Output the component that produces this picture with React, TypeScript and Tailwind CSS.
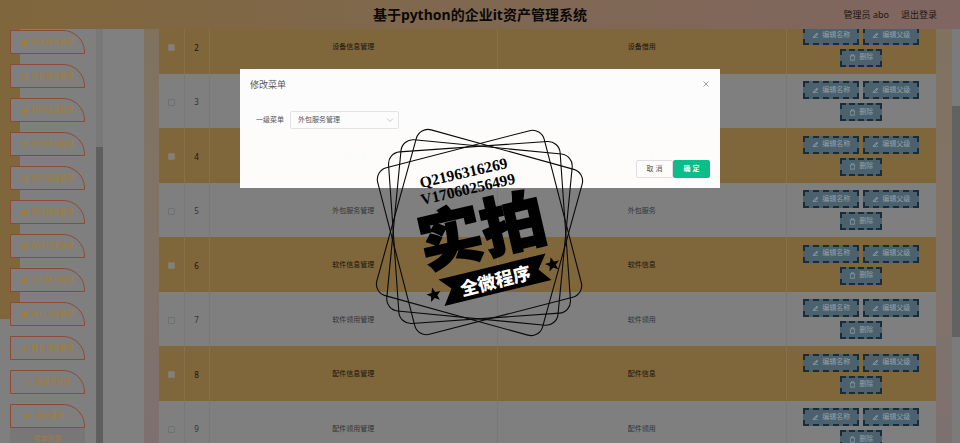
import React from "react";
import {
  RiArrowDownSLine,
  RiBriefcaseFill,
  RiClipboardFill,
  RiDeleteBin7Line,
  RiEdit2Line,
  RiFlagFill,
  RiListCheck2,
  RiCoupon3Fill,
  RiArchiveDrawerFill,
  RiComputerFill,
  RiUserFill,
} from "react-icons/ri";

function FourSquares({ className }: { className?: string }) {
  return (
    <svg viewBox="0 0 7 7" className={className} fill="currentColor">
      <path d="M0 0.5h3v2.5h-3zM4 0.5h3v2.5h-3zM0 4h3v2.5h-3zM4 4h3v2.5h-3z" />
    </svg>
  );
}

function Bars({ className }: { className?: string }) {
  return (
    <svg viewBox="0 0 7 7" className={className} fill="currentColor">
      <path d="M0 3h1.8v3.8h-1.8zM2.6 0.3h1.8v6.5h-1.8zM5.2 2h1.8v4.8h-1.8z" />
    </svg>
  );
}

const menu = [
  { label: "附属服务管理", icon: RiClipboardFill },
  { label: "外包服务管理", icon: FourSquares },
  { label: "软件信息管理", icon: Bars },
  { label: "软件领用管理", icon: FourSquares },
  { label: "配件信息管理", icon: FourSquares },
  { label: "配件领用管理", icon: RiCoupon3Fill },
  { label: "配件归还管理", icon: RiBriefcaseFill },
  { label: "办公耗材管理", icon: RiArchiveDrawerFill },
  { label: "耗材入库管理", icon: RiComputerFill },
  { label: "耗材领用管理", icon: RiUserFill },
  { label: "管理员管理", icon: RiListCheck2 },
  { label: "系统管理", icon: RiFlagFill },
];

const rows = [
  { id: 2, parent: "设备信息管理", name: "设备借用" },
  { id: 3, parent: "附属服务管理", name: "附属服务" },
  { id: 4, parent: "外包服务管理", name: "外包类型" },
  { id: 5, parent: "外包服务管理", name: "外包服务" },
  { id: 6, parent: "软件信息管理", name: "软件信息" },
  { id: 7, parent: "软件领用管理", name: "软件领用" },
  { id: 8, parent: "配件信息管理", name: "配件信息" },
  { id: 9, parent: "配件领用管理", name: "配件领用" },
];

function Header() {
  return (
    <header className="relative flex h-[29px] shrink-0 items-center justify-end bg-linear-to-r from-[#80663b] via-[#7f6850] to-[#806662] px-[23px]">
      <h1 className="absolute inset-x-0 text-center text-[14px] leading-[28px] font-bold text-[#0c0907]">
        基于python的企业it资产管理系统
      </h1>
      <div className="relative flex gap-3 text-[9px] text-[#1d1614]">
        <span>管理员 abo</span>
        <a href="#logout">退出登录</a>
      </div>
    </header>
  );
}

function Sidebar() {
  return (
    <aside className="flex w-[103px] shrink-0 overflow-hidden bg-[#7f7f7f]">
      <nav className="relative min-w-0 flex-1">
        <div className="absolute top-0 left-0 h-[290px] w-5 bg-[#80663b]" />
        <ul className="relative flex flex-col gap-[10px] pt-px pl-[10px]">
          {menu.map(({ label, icon: Icon }, i) => (
            <li key={label} className="w-[75px]">
              <a
                href="#menu"
                className={
                  "flex h-6 items-center rounded-tr-[22px] border border-[#8e4a35] bg-[#7f7f7f] pr-[5px] text-[7px] whitespace-nowrap text-[#a17d3a] " +
                  (label.length < 6 ? "gap-1 pl-[13px]" : "gap-[3px] pl-[10px]")
                }
              >
                <Icon className="size-[7px] shrink-0" />
                <span>{label}</span>
                <RiArrowDownSLine className="-ml-1 ml-auto size-[6px] shrink-0 text-[#8a7658]" />
              </a>
              {i === menu.length - 1 && (
                <a href="#list" className="block h-6 bg-[#777777] text-center text-[7px] leading-[21px] text-[#a17d3a]">
                  菜单列表
                </a>
              )}
            </li>
          ))}
        </ul>
      </nav>
      <div className="w-[7px] bg-[#787878] pt-[118px]">
        <div className="h-full bg-[#5f5f5f]" />
      </div>
    </aside>
  );
}

function ActionButton({ label, remove }: { label: string; remove?: boolean }) {
  const Icon = remove ? RiDeleteBin7Line : RiEdit2Line;
  return (
    <button
      className={
        "flex h-[18px] items-center justify-center gap-[3px] border-2 border-dashed border-[#182d39] bg-[#4b626e] text-[7px] whitespace-nowrap text-[#94a0a6] " +
        (remove ? "w-[42px]" : "w-14")
      }
    >
      <Icon className="size-[7px]" />
      {label}
    </button>
  );
}

function MenuTable() {
  return (
    <table className="-mt-[10px] w-full table-fixed border-collapse text-center text-[7px]">
      <colgroup>
        <col className="w-[25px]" />
        <col className="w-[25px]" />
        <col />
        <col />
        <col className="w-[150px]" />
      </colgroup>
      <tbody>
        {rows.map((row) => {
          const gold = row.id % 2 === 0;
          const line = gold ? "pt-[2px] border-r border-[#8a7047]" : "pt-[2px] border-r border-[#787878]";
          return (
            <tr key={row.id} className={gold ? "h-[55px] bg-[#80663b] text-[#1a140c]" : "h-[54px] bg-[#7f7f7f] text-[#343434]"}>
              <td className={line}>
                <input
                  type="checkbox"
                  aria-label={"选择 " + row.id}
                  className={
                    "mx-auto block size-[7px] appearance-none rounded-[1px] border " +
                    (gold ? "border-[#857a68] bg-[#808080]" : "border-[#707070] bg-[#7f7f7f]")
                  }
                />
              </td>
              <td className={line + " text-[8px]"}>{row.id}</td>
              <td className={line}>{row.parent}</td>
              <td className={line}>{row.name}</td>
              <td>
                <div className="flex flex-wrap justify-center gap-1 px-4">
                  <ActionButton label="编辑名称" />
                  <ActionButton label="编辑父级" />
                  <ActionButton label="删除" remove />
                </div>
              </td>
            </tr>
          );
        })}
      </tbody>
    </table>
  );
}

function Dialog() {
  return (
    <div
      role="dialog"
      aria-labelledby="dialog-title"
      className="absolute top-[69px] left-1/2 flex h-[119px] w-1/2 -translate-x-1/2 flex-col bg-white/98 px-[10px] pt-[9px] pb-[10px] text-[#555555]"
    >
      <div className="flex items-center justify-between">
        <h2 id="dialog-title" className="text-[9px] leading-[14px]">修改菜单</h2>
        <button aria-label="关闭" className="text-[#888888]">
          <svg viewBox="0 0 8 8" className="size-2" fill="none" stroke="currentColor" strokeWidth="0.8">
            <path d="M1.5 0.5l5 5M6.5 0.5l-5 5" />
          </svg>
        </button>
      </div>
      <div className="mt-[19px] flex items-center gap-[6px] pl-[6px] text-[7px]">
        <label htmlFor="parent-menu">一级菜单</label>
        <div className="relative">
          <select
            id="parent-menu"
            className="block h-[18px] w-[109px] appearance-none rounded-[2px] border border-[#e2e3e5] bg-transparent pl-[7px] text-[7px]"
          >
            <option>外包服务管理</option>
          </select>
          <svg viewBox="0 0 8 8" className="pointer-events-none absolute top-[5px] right-[5px] size-2" fill="none" stroke="#b8bbc0" strokeWidth="0.8">
            <path d="M1 2.5l3 3 3-3" />
          </svg>
        </div>
      </div>
      <div className="mt-auto flex justify-end text-[7px]">
        <button className="h-[18px] w-[37px] rounded-[2px] border border-[#dddfe3]">取 消</button>
        <button className="h-[18px] w-[37px] rounded-[2px] bg-[#0bbd89] font-bold text-white">确 定</button>
      </div>
    </div>
  );
}

const star = "0,-7.5 2,-2.5 7.2,-2.3 3.2,1 4.5,6 0,3.2 -4.5,6 -3.2,1 -7.2,-2.3 -2,-2.5";

function Stamp() {
  return (
    <svg
      viewBox="0 0 216 216"
      className="pointer-events-none absolute top-[125px] left-1/2 -ml-[108px] size-[216px]"
    >
      <g fill="none" stroke="#0a0a0a" strokeWidth="1.1">
        {[15.5, 5.5, -4, -14.5].map((angle) => (
          <rect key={angle} x="21.5" y="21.5" width="172" height="172" rx="12" transform={`rotate(${angle} 107.5 107.5)`} />
        ))}
      </g>
      <g fontFamily="'Liberation Serif', serif" fontWeight="700" fontSize="15.5">
        <text transform="translate(49 63) rotate(-13)">Q2196316269</text>
        <text transform="translate(50 80) rotate(-13)">V17060256499</text>
      </g>
      <g fontFamily="'Noto Sans CJK SC', sans-serif" fontWeight="900" textAnchor="middle">
        <text
          transform="translate(110 106) rotate(-13)"
          y="23"
          fontSize="64"
          stroke="#000"
          strokeWidth="1.8"
        >
          实拍
        </text>
        <polygon points="66.5,154.5 173.5,128.5 166.5,144.5 179.5,155 72.5,181 79.5,163.5" />
        <text transform="translate(123.5 156) rotate(-14)" y="6.5" fontSize="18" fill="#fff">
          全微程序
        </text>
      </g>
      <polygon points={star} transform="translate(62 170) rotate(-14)" />
      <polygon points={star} transform="translate(180.5 139.5) rotate(-14)" />
    </svg>
  );
}

export default function App() {
  return (
    <div className="relative flex h-screen flex-col overflow-hidden bg-[#808080] font-['Noto_Sans','Noto_Sans_CJK_SC',sans-serif]">
      <Header />
      <div className="flex min-h-0 flex-1">
        <Sidebar />
        <main className="ml-[41px] min-w-0 flex-1 overflow-hidden bg-linear-to-b from-[#80725f] via-[#807468] to-[#7d7070] pr-4 pl-[15px]">
          <MenuTable />
        </main>
        <div className="w-2 bg-[#7b7b7b] pt-[77px]">
          <div className="h-[231px] bg-[#626262]" />
        </div>
      </div>
      <Dialog />
      <Stamp />
    </div>
  );
}
